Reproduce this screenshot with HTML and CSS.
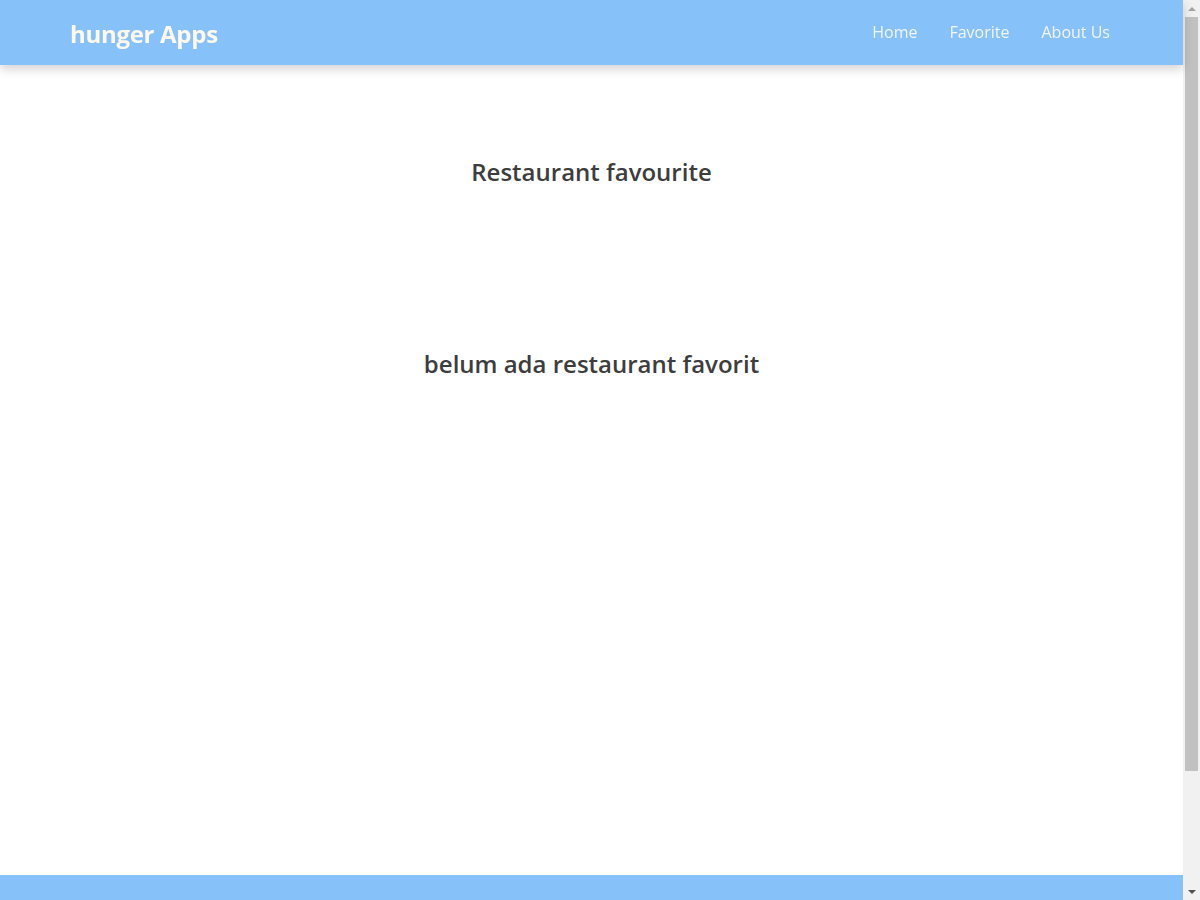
FILE: index.html
```html
<!DOCTYPE html>
<html lang="id">
<head>
<meta charset="utf-8">
<title>hunger Apps</title>
<link rel="stylesheet" href="styles.css">
</head>
<body>
<div class="page">
  <header class="app-bar">
    <div class="app-bar__brand">hunger Apps</div>
    <nav class="app-bar__nav">
      <a href="#" class="nav-link">Home</a>
      <a href="#" class="nav-link">Favorite</a>
      <a href="#" class="nav-link">About Us</a>
    </nav>
  </header>
  <main class="content">
    <h2 class="content__title">Restaurant favourite</h2>
    <div class="restaurants">
      <h3 class="restaurants__empty">belum ada restaurant favorit</h3>
    </div>
  </main>
  <footer class="footer"></footer>
</div>
<div class="scrollbar" aria-hidden="true">
  <div class="scrollbar__arrow scrollbar__arrow--up"></div>
  <div class="scrollbar__track"><div class="scrollbar__thumb"></div></div>
  <div class="scrollbar__arrow scrollbar__arrow--down"></div>
</div>
</body>
</html>
```

FILE: styles.css
```css
* { box-sizing: border-box; }
html, body { margin: 0; padding: 0; }
body {
  font-family: "Open Sans", "Noto Sans", sans-serif;
  color: #3d3d3d;
  background: #fff;
}
.page {
  margin-right: 17px;
}
.app-bar {
  height: 65px;
  background: #86c1f9;
  display: flex;
  align-items: center;
  justify-content: space-between;
  padding: 0 73px 0 70px;
  box-shadow: 0 4px 10px rgba(0,0,0,0.18);
  position: relative;
  z-index: 1;
}
.app-bar__brand {
  color: #fff8ec;
  font-size: 24px;
  font-weight: 700;
  letter-spacing: -0.3px;
  padding-top: 1px;
}
.app-bar__nav {
  display: flex;
  gap: 32px;
}
.nav-link {
  color: #f1f4f8;
  text-decoration: none;
  font-size: 16px;
  padding-bottom: 2px;
}
.content {
  min-height: 810px;
  padding-top: 89px;
  text-align: center;
}
.content__title {
  margin: 0;
  font-size: 24px;
  font-weight: 600;
  line-height: 36px;
}
.restaurants {
  padding-top: 156px;
}
.restaurants__empty {
  margin: 0;
  font-size: 24px;
  font-weight: 600;
  line-height: 36px;
}
.footer {
  height: 160px;
  background: #86c1f9;
}
.scrollbar {
  position: fixed;
  top: 0;
  right: 0;
  width: 17px;
  height: 100vh;
  background: #f1f1f1;
  display: flex;
  flex-direction: column;
}
.scrollbar__arrow {
  height: 17px;
  display: flex;
  align-items: center;
  justify-content: center;
}
.scrollbar__arrow--up::before {
  content: "";
  border-left: 4px solid transparent;
  border-right: 4px solid transparent;
  border-bottom: 4px solid #a3a3a3;
}
.scrollbar__arrow--down::before {
  content: "";
  border-left: 4px solid transparent;
  border-right: 4px solid transparent;
  border-top: 4px solid #505050;
}
.scrollbar__track {
  flex: 1;
  padding: 0 2px;
}
.scrollbar__thumb {
  height: 754px;
  background: #c1c1c1;
}
```
